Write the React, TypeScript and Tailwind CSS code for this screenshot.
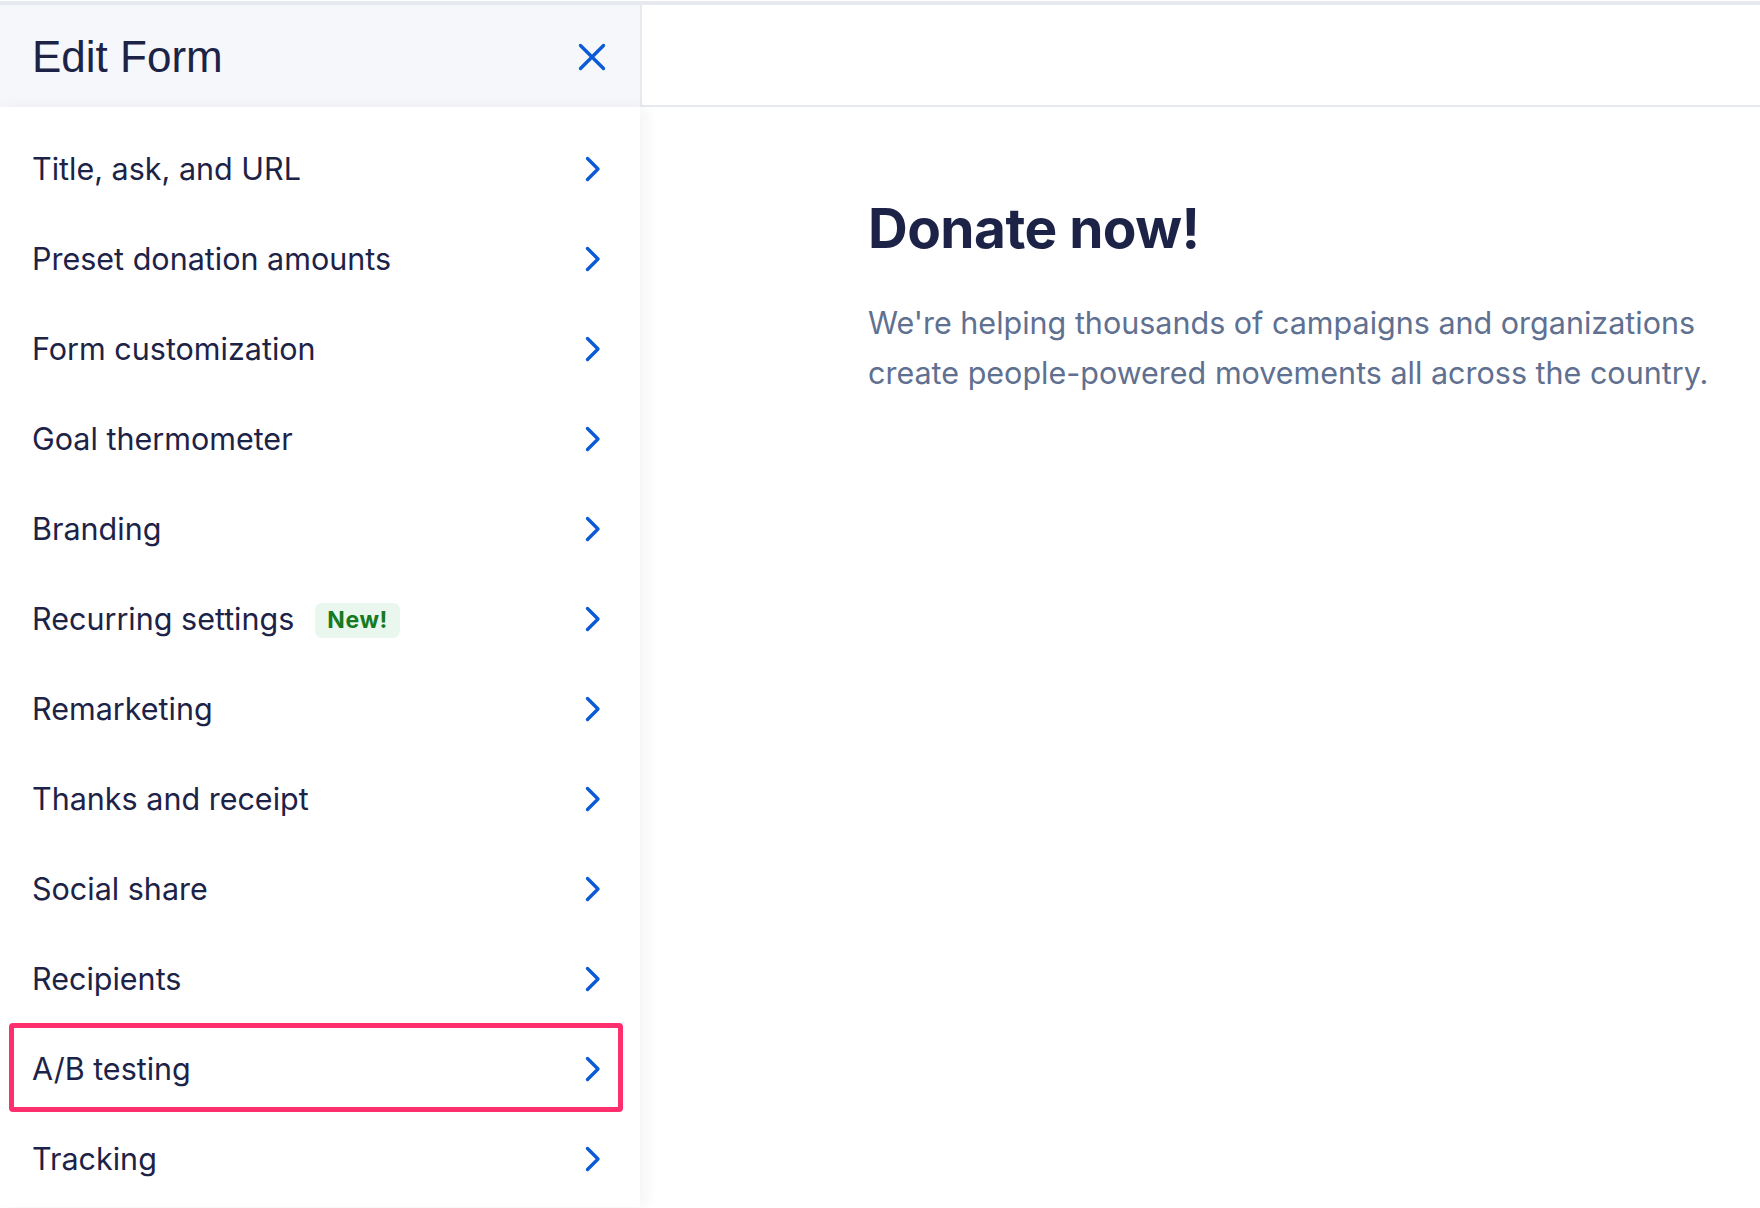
import React from "react";

const items = [
  "Title, ask, and URL",
  "Preset donation amounts",
  "Form customization",
  "Goal thermometer",
  "Branding",
  "Recurring settings",
  "Remarketing",
  "Thanks and receipt",
  "Social share",
  "Recipients",
  "A/B testing",
  "Tracking",
];

const Chevron = () => (
  <svg width="16" height="26" viewBox="0 0 16 26" fill="none" className="shrink-0">
    <polyline
      points="2.5,2.5 13,13 2.5,23.5"
      stroke="#0b5bd6"
      strokeWidth="3.4"
      strokeLinecap="round"
      strokeLinejoin="round"
    />
  </svg>
);

const CloseIcon = () => (
  <svg width="28" height="28" viewBox="0 0 28 28" fill="none">
    <path
      d="M2.5 2.5L25.5 25.5M25.5 2.5L2.5 25.5"
      stroke="#0b5bd6"
      strokeWidth="3.4"
      strokeLinecap="round"
    />
  </svg>
);

export default function App() {
  return (
    <div className="h-[1208px] w-[1760px] overflow-hidden bg-white font-['Inter',sans-serif] text-[#1d2347]">
      <div className="h-px bg-white" />
      {/* top bar */}
      <div className="flex h-[106px] border-t-4 border-[#e6e9ee]">
        <div className="flex w-[640px] items-center justify-between bg-[#f5f7fa] pl-[32px] pr-[34px]">
          <h1 className="mt-[2px] font-['Liberation_Sans',sans-serif] text-[44px] leading-none">
            Edit Form
          </h1>
          <button type="button" className="mt-[2px] flex">
            <CloseIcon />
          </button>
        </div>
        <div className="flex-1 border-b-2 border-l-2 border-[#e6e9ee] bg-white" />
      </div>

      <div className="flex h-[1100px]">
        {/* Sidebar */}
        <nav className="relative z-10 w-[640px] bg-white pt-[17px] shadow-[6px_0_14px_rgba(20,30,60,0.05)]">
          {items.map((label) => (
            <div
              key={label}
              className="relative flex h-[90px] items-center justify-between pl-[32px] pr-[39px]"
            >
              <div className="flex items-center gap-[21px]">
                <span className="text-[30.5px] leading-none">{label}</span>
                {label === "Recurring settings" && (
                  <span className="mt-[3px] flex h-[35px] items-center rounded-[7px] bg-[#eaf7ef] px-[12px] text-[23px] font-bold leading-none tracking-wide text-[#167a22]">
                    New!
                  </span>
                )}
              </div>
              <Chevron />
              {label === "A/B testing" && (
                <div className="absolute bottom-[2px] left-[9px] right-[17px] top-[-1px] rounded-[4px] border-[5px] border-[#ff2e6c]" />
              )}
            </div>
          ))}
        </nav>

        {/* Preview */}
        <main className="flex-1 pl-[228px] pt-[88px]">
          <h2 className="text-[55px] font-bold leading-[1.2] tracking-[-0.01em] text-[#1d2347]">
            Donate now!
          </h2>
          <p className="mt-[37px] max-w-[870px] text-[30.5px] leading-[50px] text-[#607090]">
            We're helping thousands of campaigns and organizations create
            people-powered movements all across the country.
          </p>
        </main>
      </div>
    </div>
  );
}
